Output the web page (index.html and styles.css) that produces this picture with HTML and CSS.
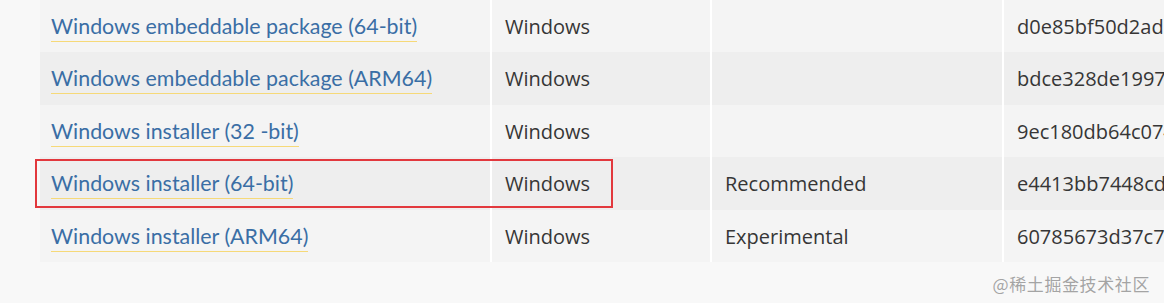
FILE: index.html
```html
<!DOCTYPE html>
<html lang="en">
<head>
<meta charset="utf-8">
<title>Python downloads</title>
<link rel="stylesheet" href="styles.css">
</head>
<body>
<div class="page">
  <table class="files">
    <tbody>
      <tr class="odd">
        <td class="c1"><a href="#">Windows embeddable package (64-bit)</a></td>
        <td class="c2">Windows</td>
        <td class="c3"></td>
        <td class="c4">d0e85bf50d2adc5d2e5a0e8c1ba3d45b</td>
      </tr>
      <tr class="even">
        <td class="c1"><a href="#">Windows embeddable package (ARM64)</a></td>
        <td class="c2">Windows</td>
        <td class="c3"></td>
        <td class="c4">bdce328de19977f2c3e9d7a23b7e0a11</td>
      </tr>
      <tr class="odd">
        <td class="c1"><a href="#">Windows installer (32 -bit)</a></td>
        <td class="c2">Windows</td>
        <td class="c3"></td>
        <td class="c4">9ec180db64c074e0f4c2d6b3a5f7e8c1</td>
      </tr>
      <tr class="even hl">
        <td class="c1"><a href="#">Windows installer (64-bit)</a></td>
        <td class="c2">Windows</td>
        <td class="c3">Recommended</td>
        <td class="c4">e4413bb7448cd1a2b3c4d5e6f7a8b9c0</td>
      </tr>
      <tr class="odd">
        <td class="c1"><a href="#">Windows installer (ARM64)</a></td>
        <td class="c2">Windows</td>
        <td class="c3">Experimental</td>
        <td class="c4">60785673d37c75a1b2c3d4e5f6a7b8c9</td>
      </tr>
    </tbody>
  </table>
  <div class="hlbox"></div>
  <div class="watermark">@稀土掘金技术社区</div>
</div>
</body>
</html>
```

FILE: styles.css
```css
html, body {
  margin: 0;
  padding: 0;
}
body {
  background: #f8f8f8;
  width: 1164px;
  height: 303px;
  overflow: hidden;
}
.page {
  position: relative;
  padding-left: 40px;
  height: 303px;
}
.files {
  border-collapse: separate;
  border-spacing: 0;
  table-layout: fixed;
  width: 1200px;
}
.files td {
  padding: 0 12px;
  white-space: nowrap;
  overflow: hidden;
  vertical-align: middle;
  font-family: "Open Sans", "Noto Sans", sans-serif;
  font-size: 20px;
  color: #363636;
  border-right: 2px solid #ffffff;
}
.files td.c4 { border-right: 0; }
.files tr.odd td { background: #f4f4f4; height: 52px; }
.files tr.even td { background: #eeeeee; height: 53px; }
.c1 { width: 427px; padding-left: 11px !important; }
.c2 { width: 193px; padding-left: 13px !important; }
.c3 { width: 265px; padding-left: 13px !important; }
.c4 { padding-left: 13px !important; }
.files a {
  font-family: "Lato", "Source Sans Pro", sans-serif;
  font-size: 21.4px;
  color: #3a6ea5;
  text-decoration: none;
  border-bottom: 1px solid #f6d978;
  padding-bottom: 2px;
}
.hlbox {
  position: absolute;
  left: 35px;
  top: 159px;
  width: 574px;
  height: 45px;
  border: 2px solid #e2383d;
}
.watermark {
  position: absolute;
  right: 14px;
  top: 271px;
  font-family: "Noto Sans CJK SC", "Noto Sans", sans-serif;
  font-size: 17px;
  color: #a4a4a4;
  letter-spacing: 0.6px;
  text-shadow: 0 0 1px #ffffff;
}
```
